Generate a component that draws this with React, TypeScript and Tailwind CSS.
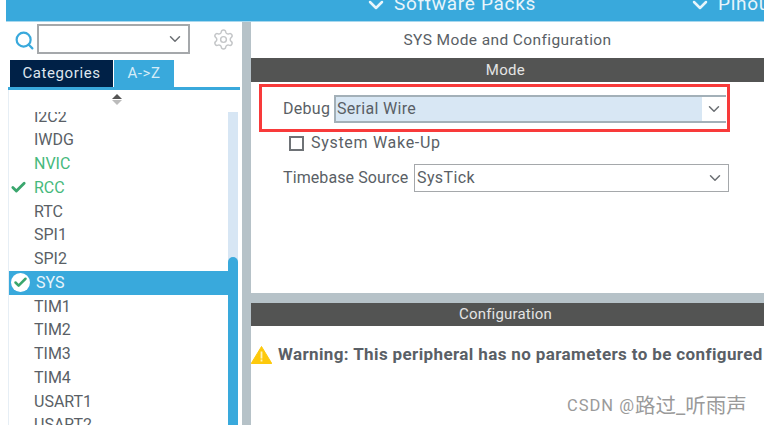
import React from "react";
import { ChevronDown, Search, Settings, Check } from "lucide-react";

const items: { n: string; c?: string; check?: boolean }[] = [
  { n: "IWDG" },
  { n: "NVIC", c: "text-[#46b97c]" },
  { n: "RCC", c: "text-[#46b97c]", check: true },
  { n: "RTC" },
  { n: "SPI1" },
  { n: "SPI2" },
];
const after = ["TIM1", "TIM2", "TIM3", "TIM4", "USART1", "USART2"];

function Row({ n, c, check }: { n: string; c?: string; check?: boolean }) {
  return (
    <div className={`h-[23.75px] shrink-0 flex items-center relative pl-[25px] text-[16px] ${c ?? "text-[#5a5f66]"}`}>
      {check && <Check size={17} strokeWidth={4} className="absolute left-[1px] top-[3px] text-[#3aa66d]" />}
      {n}
    </div>
  );
}

export default function App() {
  return (
    <div className="w-[764px] h-[425px] overflow-hidden bg-white flex flex-col font-['Roboto',sans-serif] relative">
      <div className="h-[22px] ml-[6px] shrink-0 bg-[#39a9dc] border-b border-[#a9d8ee] flex items-center text-[#e8f5fb] text-[19px] tracking-[0.7px] pl-[358px] overflow-hidden">
        <div className="flex items-center gap-[6px] -mt-[12px] w-[324px] shrink-0">
          <ChevronDown size={24} strokeWidth={2.5} />
          <span>Software Packs</span>
        </div>
        <div className="flex items-center gap-[6px] -mt-[12px] shrink-0">
          <ChevronDown size={24} strokeWidth={2.5} />
          <span>Pinout</span>
        </div>
      </div>
      <div className="flex-1 flex min-h-0">
        <div className="w-[242px] shrink-0 flex flex-col pl-[8px] min-h-0">
          <div className="h-[38px] shrink-0 flex items-start pt-[2px] pl-[6px]">
            <Search size={21} strokeWidth={2.5} className="text-[#39a9dc] mt-[6px] mr-[2px]" />
            <div className="w-[153px] h-[30px] border-2 border-[#a5a8ab] flex items-center justify-end pr-[4px]">
              <ChevronDown size={18} className="text-[#6b6f73]" />
            </div>
            <Settings size={23} strokeWidth={1.5} className="text-[#c4c6c8] ml-[22px] mt-[4px]" />
          </div>
          <div className="h-[27px] shrink-0 flex items-stretch pl-[2px] text-[15px] tracking-[0.6px] text-[#dfe6ee]">
            <div className="w-[103px] bg-[#002147] flex items-center justify-center">Categories</div>
            <div className="w-[60px] ml-px bg-[#39a9dc] flex items-center justify-center text-[#d5ecf8]">A-&gt;Z</div>
          </div>
          <div className="h-[3px] shrink-0 w-[232px] bg-[#39a9dc]" />
          <div className="flex-1 min-h-0 flex w-[231px] border-l border-[#e6eef5]">
            <div className="flex-1 min-w-0 flex flex-col overflow-hidden">
              <div className="h-[22px] shrink-0 flex flex-col items-center pt-[4px] gap-[1px] pr-[3px]">
                <div className="w-0 h-0 border-x-[5px] border-x-transparent border-b-[5px] border-b-[#555]" />
                <div className="w-0 h-0 border-x-[5px] border-x-transparent border-t-[5px] border-t-[#bbb]" />
              </div>
              <div className="h-[16.5px] shrink-0 overflow-hidden relative">
                <div className="absolute left-[25px] -top-[7px] text-[16px] text-[#5a5f66] leading-[23.8px]">I2C2</div>
              </div>
              {items.map((i) => (
                <Row key={i.n} {...i} />
              ))}
              <div className="h-[23.75px] shrink-0 bg-[#39a9dc] flex items-center text-[#e8f5fb] text-[16px] pl-[2px] gap-[6px]">
                <span className="w-[19px] h-[19px] rounded-full bg-white flex items-center justify-center">
                  <Check size={15} strokeWidth={4} className="text-[#3aa66d]" />
                </span>
                SYS
              </div>
              {after.map((n) => (
                <Row key={n} n={n} />
              ))}
            </div>
            <div className="w-[10px] shrink-0 mr-[1px] pt-[22px] flex flex-col">
              <div className="flex-1 bg-[#d7e6f4] flex flex-col pt-[145px]">
                <div className="flex-1 bg-[#39a9dc] rounded-t-[5px]" />
              </div>
            </div>
          </div>
        </div>
        <div className="w-[9px] shrink-0 bg-[#b6c2c8]" />
        <div className="flex-1 min-w-0 flex flex-col">
          <div className="h-[271px] shrink-0 flex flex-col relative">
            <div className="h-[36px] shrink-0 flex items-center justify-center pt-[2px] text-[15.5px] tracking-[0.4px] text-[#5a5f66]">
              SYS Mode and Configuration
            </div>
            <div className="h-[24px] shrink-0 bg-[#535453] flex items-center justify-center pr-[4px] text-[#e4e4e4] text-[15px] tracking-[0.3px]">
              Mode
            </div>
            <div className="pt-[13px] pl-[32px] flex items-center text-[#5a5f66] text-[16px] tracking-[0.3px]">
              <span className="w-[51px]">Debug</span>
              <div className="w-[392px] h-[28px] border-2 border-[#a3b0b8] border-r-0 flex items-center bg-[#d8e7f4] pl-[1px] text-[16px]">
                <span className="flex-1">Serial Wire</span>
                <span className="w-[24px] h-full bg-white flex items-center justify-center">
                  <ChevronDown size={18} className="text-[#6b6f73]" />
                </span>
              </div>
            </div>
            <div className="mt-[8px] pl-[38px] flex items-center text-[#5a5f66] text-[16px] tracking-[0.7px]">
              <span className="w-[15px] h-[15px] border-2 border-[#6e7276] mr-[7px]" />
              System Wake-Up
            </div>
            <div className="mt-[9px] pl-[32px] flex items-center text-[#5a5f66] text-[16px] tracking-[0.1px]">
              <span className="w-[131px] whitespace-nowrap">Timebase Source</span>
              <div className="w-[315px] h-[28px] border border-[#a5a8ab] flex items-center pl-[2px] text-[16px] tracking-[0.4px]">
                <span className="flex-1">SysTick</span>
                <span className="w-[26px] flex items-center justify-center">
                  <ChevronDown size={18} className="text-[#6b6f73]" />
                </span>
              </div>
            </div>
            <div className="absolute left-[8px] top-[62px] w-[471px] h-[48px] border-[3px] border-[#f83a3a]" />
          </div>
          <div className="h-[10px] shrink-0 bg-[#b6c2c8]" />
          <div className="h-[23px] shrink-0 bg-[#535453] flex items-center justify-center pr-[4px] text-[#e4e4e4] text-[15px] tracking-[0.2px]">
            Configuration
          </div>
          <div className="flex items-center pt-[16px] whitespace-nowrap text-[17px] font-bold text-[#5a5f66] tracking-[0.38px]">
            <svg width="21" height="18" viewBox="0 0 21 18" className="mr-[6px] shrink-0">
              <path d="M10.5 0.5 L20.8 17.5 L0.2 17.5 Z" fill="#fdc90c" stroke="#fdc90c" strokeLinejoin="round" />
              <rect x="9.6" y="5.5" width="1.8" height="7" fill="#fff3b8" />
              <rect x="9.6" y="13.5" width="1.8" height="2" fill="#fff3b8" />
            </svg>
            Warning: This peripheral has no parameters to be configured
          </div>
        </div>
      </div>
      <div className="absolute left-[567px] top-[391px] flex items-center text-[16.5px] text-[#9a9a9a] tracking-[1px] font-['Roboto','Noto_Sans_CJK_SC',sans-serif]">
        CSDN @<span className="text-[20.5px] tracking-[0px]">路过_听雨声</span>
      </div>
    </div>
  );
}
